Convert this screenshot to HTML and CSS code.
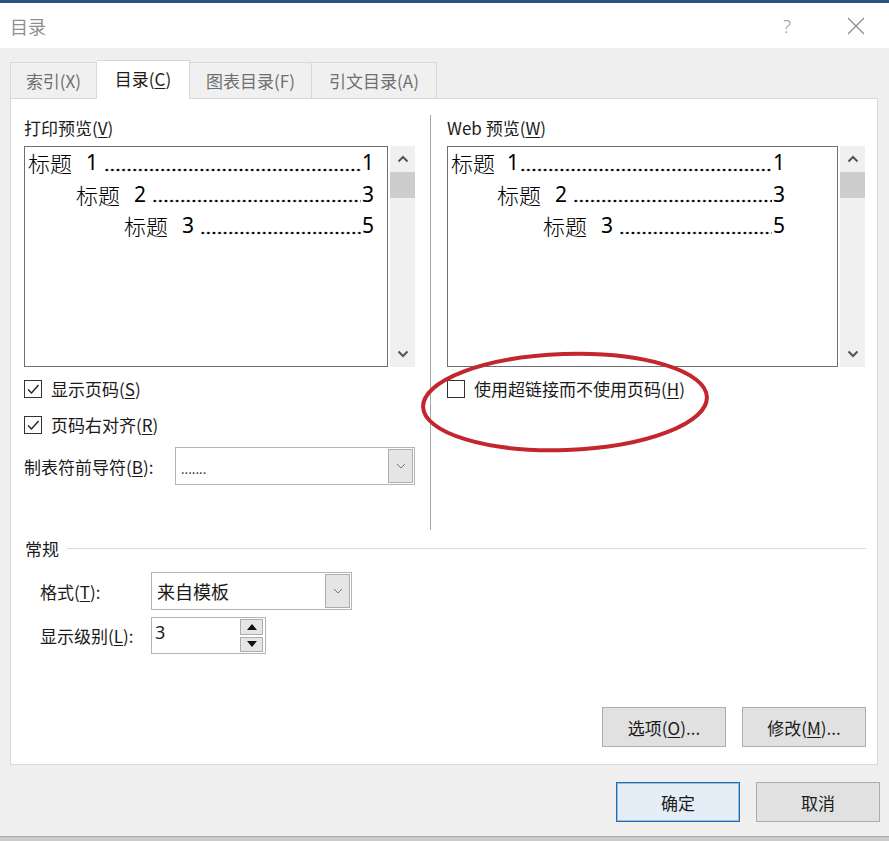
FILE: index.html
```html
<!DOCTYPE html>
<html lang="zh-CN">
<head>
    <meta charset="UTF-8">
    <meta name="viewport" content="width=device-width, initial-scale=1.0">
    <title>目录</title>
    <link rel="stylesheet" href="styles.css">
</head>
<body>
    <div class="topline"></div>
    <header class="titlebar">
        <span class="title">目录</span>
        <div class="title-btns">
            <span class="help">?</span>
            <svg class="close" width="18" height="18" viewBox="0 0 18 18">
                <path d="M1 1L17 17M17 1L1 17" stroke="#8a8a8a" stroke-width="1.2" fill="none"/>
            </svg>
        </div>
    </header>

    <nav class="tabs">
        <div class="tab tab-index">索引(X)</div>
        <div class="tab active">目录(<u>C</u>)</div>
        <div class="tab tab-fig">图表目录(F)</div>
        <div class="tab tab-cite">引文目录(A)</div>
    </nav>

    <section class="panel">
        <div class="previews">
            <div class="col col-print">
                <div class="label">打印预览(<u>V</u>)</div>
                <div class="preview-wrap">
                    <div class="preview">
                        <div class="entry"><span class="name">标题</span><span class="num">1</span><span class="dots"></span><span class="page">1</span></div>
                        <div class="entry lvl2"><span class="name">标题</span><span class="num">2</span><span class="dots"></span><span class="page">3</span></div>
                        <div class="entry lvl3"><span class="name">标题</span><span class="num">3</span><span class="dots"></span><span class="page">5</span></div>
                    </div>
                    <div class="scrollbar">
                        <svg class="arrow" width="12" height="8" viewBox="0 0 12 8"><path d="M1.5 6.5L6 2L10.5 6.5" stroke="#555" stroke-width="2" fill="none"/></svg>
                        <div class="thumb"></div>
                        <div class="track"></div>
                        <svg class="arrow" width="12" height="8" viewBox="0 0 12 8"><path d="M1.5 1.5L6 6L10.5 1.5" stroke="#555" stroke-width="2" fill="none"/></svg>
                    </div>
                </div>
                <label class="check first">
                    <span class="box"><svg width="16" height="16" viewBox="0 0 16 16"><path d="M3 8.5L6.5 12L13.5 4" stroke="#222" stroke-width="1.4" fill="none"/></svg></span>
                    显示页码(<u>S</u>)
                </label>
                <label class="check">
                    <span class="box"><svg width="16" height="16" viewBox="0 0 16 16"><path d="M3 8.5L6.5 12L13.5 4" stroke="#222" stroke-width="1.4" fill="none"/></svg></span>
                    页码右对齐(<u>R</u>)
                </label>
                <div class="leader-row">
                    <span>制表符前导符(<u>B</u>):</span>
                    <div class="select leader-select">
                        <span class="value small-dots">.......</span>
                        <span class="drop"><svg width="10" height="6" viewBox="0 0 10 6"><path d="M1 1L5 5L9 1" stroke="#777" stroke-width="1" fill="none"/></svg></span>
                    </div>
                </div>
            </div>

            <div class="divider"></div>

            <div class="col col-web">
                <div class="label">Web 预览(<u>W</u>)</div>
                <div class="preview-wrap">
                    <div class="preview web">
                        <div class="entry"><span class="name">标题</span><span class="num tight">1</span><span class="dots"></span><span class="page">1</span></div>
                        <div class="entry lvl2"><span class="name">标题</span><span class="num">2</span><span class="dots"></span><span class="page">3</span></div>
                        <div class="entry lvl3"><span class="name">标题</span><span class="num">3</span><span class="dots"></span><span class="page">5</span></div>
                    </div>
                    <div class="scrollbar">
                        <svg class="arrow" width="12" height="8" viewBox="0 0 12 8"><path d="M1.5 6.5L6 2L10.5 6.5" stroke="#555" stroke-width="2" fill="none"/></svg>
                        <div class="thumb"></div>
                        <div class="track"></div>
                        <svg class="arrow" width="12" height="8" viewBox="0 0 12 8"><path d="M1.5 1.5L6 6L10.5 1.5" stroke="#555" stroke-width="2" fill="none"/></svg>
                    </div>
                </div>
                <label class="check first">
                    <span class="box"></span>
                    使用超链接而不使用页码(<u>H</u>)
                </label>
            </div>

            <svg class="mark" width="292" height="104" viewBox="0 0 292 104">
                <ellipse cx="146" cy="52" rx="142" ry="48" transform="rotate(-2 146 52)" stroke="#c4262e" stroke-width="4" fill="none"/>
            </svg>
        </div>

        <div class="general">
            <div class="group-title">常规</div>
            <div class="field-row format-row">
                <span class="field-label">格式(<u>T</u>):</span>
                <div class="select format-select">
                    <span class="value">来自模板</span>
                    <span class="drop"><svg width="10" height="6" viewBox="0 0 10 6"><path d="M1 1L5 5L9 1" stroke="#777" stroke-width="1" fill="none"/></svg></span>
                </div>
            </div>
            <div class="field-row level-row">
                <span class="field-label">显示级别(<u>L</u>):</span>
                <div class="spinner">
                    <span class="value">3</span>
                    <div class="spin-btns">
                        <span class="spin"><svg width="10" height="6" viewBox="0 0 10 6"><path d="M0 6L5 0L10 6Z" fill="#111"/></svg></span>
                        <span class="spin"><svg width="10" height="6" viewBox="0 0 10 6"><path d="M0 0L5 6L10 0Z" fill="#111"/></svg></span>
                    </div>
                </div>
            </div>
        </div>

        <div class="panel-actions">
            <button>选项(<u>O</u>)...</button>
            <button>修改(<u>M</u>)...</button>
        </div>
    </section>

    <footer class="dialog-actions">
        <button class="default">确定</button>
        <button>取消</button>
    </footer>
    <div class="bottom-edge"></div>
</body>
</html>
```

FILE: styles.css
```css
body {
    margin: 0;
    background-color: #f0eff0;
    font-family: "Noto Sans CJK SC", "Noto Sans", sans-serif;
    font-size: 17px;
    color: #1b1b1b;
    overflow: hidden;
}
u {
    text-underline-offset: 2px;
}
.topline {
    height: 3px;
    background-color: #2d5283;
}
.titlebar {
    height: 45px;
    background-color: #fff;
    display: flex;
    align-items: center;
    justify-content: space-between;
    padding-left: 10px;
}
.title {
    color: #8f8f8f;
    font-size: 18px;
}
.title-btns {
    display: flex;
    align-items: center;
    padding-right: 24px;
}
.help {
    color: #9a9a9a;
    font-family: "Noto Sans", sans-serif;
    font-size: 19px;
    font-weight: 300;
    margin-right: 56px;
}
.tabs {
    display: flex;
    align-items: flex-end;
    height: 51px;
    margin-bottom: -1px;
    padding-left: 10px;
    position: relative;
    z-index: 1;
}
.tab {
    height: 36px;
    margin-bottom: 1px;
    box-sizing: border-box;
    border: 1px solid #d9d9d9;
    border-bottom: none;
    border-left: none;
    background-color: #f0f0f0;
    color: #6f6f6f;
    display: flex;
    align-items: center;
    justify-content: center;
}
.tab-index {
    width: 87px;
    border-left: 1px solid #d9d9d9;
}
.tab.active {
    width: 93px;
    height: 39px;
    margin-bottom: 0;
    background-color: #fff;
    color: #1b1b1b;
    padding-bottom: 3px;
}
.tab-fig {
    width: 122px;
    border-left: none;
}
.tab-cite {
    width: 125px;
}
.panel {
    margin-left: 10px;
    width: 868px;
    box-sizing: border-box;
    background-color: #fff;
    border: 1px solid #d9d9d9;
    padding: 16px 11px 17px 13px;
}
.previews {
    display: flex;
    height: 415px;
    position: relative;
}
.col-print {
    width: 391px;
}
.col-web {
    width: 419px;
}
.divider {
    width: 1px;
    background-color: #a6a6a6;
    margin: 0 16px 0 15px;
}
.label {
    margin-top: 3px;
    line-height: 20px;
}
.preview-wrap {
    display: flex;
    margin-top: 8px;
    height: 221px;
}
.preview {
    width: 364px;
    box-sizing: border-box;
    border: 1px solid #6f6f6f;
    padding: 0 13px 0 3px;
    font-family: "Noto Sans", "Noto Sans CJK SC", sans-serif;
    font-size: 21px;
    line-height: 31.5px;
    color: #000;
}
.preview.web {
    width: 391px;
    padding-right: 52px;
}
.entry {
    display: flex;
    white-space: nowrap;
}
.entry .name {
    font-family: "Noto Sans CJK SC", sans-serif;
    font-size: 22px;
    font-weight: 300;
}
.entry .num {
    margin-left: 14px;
    margin-right: 6px;
}
.entry .num.tight {
    margin-left: 12px;
    margin-right: 1px;
}
.entry .dots {
    flex: 1;
    background-image: radial-gradient(circle, #000 1.3px, transparent 1.6px);
    background-size: 5.6px 4px;
    background-repeat: repeat-x;
    background-position: left bottom 7px;
    margin-right: 1px;
}
.entry.lvl2 {
    padding-left: 48px;
}
.entry.lvl3 {
    padding-left: 96px;
}
.preview.web .entry.lvl2 {
    padding-left: 46px;
}
.preview.web .entry.lvl3 {
    padding-left: 92px;
}
.scrollbar {
    width: 25px;
    margin-left: 2px;
    background-color: #f0f0f0;
    display: flex;
    flex-direction: column;
    align-items: center;
}
.scrollbar .arrow {
    margin: 9px 0;
}
.thumb {
    width: 100%;
    height: 26px;
    background-color: #cdcdcd;
}
.track {
    flex: 1;
}
.check {
    display: flex;
    align-items: center;
    height: 18px;
    line-height: 18px;
    margin-top: 18px;
}
.check.first {
    margin-top: 13px;
}
.box {
    width: 18px;
    height: 18px;
    box-sizing: border-box;
    border: 1px solid #333;
    margin-right: 9px;
    display: flex;
    align-items: center;
    justify-content: center;
}
.leader-row {
    display: flex;
    align-items: center;
    justify-content: space-between;
    margin-top: 13px;
}
.select {
    height: 38px;
    box-sizing: border-box;
    border: 1px solid #b4b4b4;
    display: flex;
    align-items: center;
    justify-content: space-between;
    padding: 1px;
    background-color: #fff;
}
.leader-select {
    width: 240px;
}
.select .value {
    padding-left: 4px;
}
.small-dots {
    font-size: 13px;
    padding-top: 4px;
}
.drop {
    width: 25px;
    height: 100%;
    box-sizing: border-box;
    border: 1px solid #adadad;
    background-color: #e5e5e5;
    display: flex;
    align-items: center;
    justify-content: center;
}
.mark {
    position: absolute;
    left: 395px;
    top: 235px;
}
.general {
    margin-top: 9px;
}
.group-title {
    display: flex;
    align-items: center;
    line-height: 20px;
    margin-left: 1px;
}
.group-title::after {
    content: "";
    flex: 1;
    border-top: 1px solid #dcdcdc;
    margin-left: 8px;
    margin-top: -2px;
}
.field-row {
    display: flex;
    align-items: center;
    padding-left: 16px;
}
.format-row {
    margin-top: 13px;
}
.level-row {
    margin-top: 7px;
}
.field-label {
    width: 111px;
}
.format-select {
    width: 201px;
    font-size: 18px;
}
.spinner {
    width: 115px;
    height: 37px;
    box-sizing: border-box;
    border: 1px solid #b4b4b4;
    display: flex;
    justify-content: space-between;
    padding: 1px 2px 1px 0;
}
.spinner .value {
    padding-left: 3px;
    line-height: 26px;
    font-family: "Noto Sans", sans-serif;
    font-size: 18px;
}
.spin-btns {
    display: flex;
    flex-direction: column;
    gap: 2px;
}
.spin {
    width: 23px;
    flex: 1;
    box-sizing: border-box;
    border: 1px solid #adadad;
    background-color: #e5e5e5;
    display: flex;
    align-items: center;
    justify-content: center;
}
.panel-actions {
    display: flex;
    justify-content: flex-end;
    gap: 16px;
    margin-top: 53px;
}
button {
    width: 124px;
    height: 40px;
    background-color: #e1e1e1;
    border: 1px solid #adadad;
    font-family: "Noto Sans CJK SC", sans-serif;
    font-size: 17px;
    color: #1b1b1b;
    padding: 0;
}
.dialog-actions {
    display: flex;
    justify-content: flex-end;
    gap: 16px;
    padding: 17px 9px 14px 0;
}
button.default {
    border: 1px solid #2a68a6;
    box-shadow: inset 0 0 0 1px #8cc1ea;
    background-color: #e5eef6;
}
.bottom-edge {
    height: 5px;
    background-color: #cbcbcb;
    border-top: 1px solid #a9a9a9;
}
```
